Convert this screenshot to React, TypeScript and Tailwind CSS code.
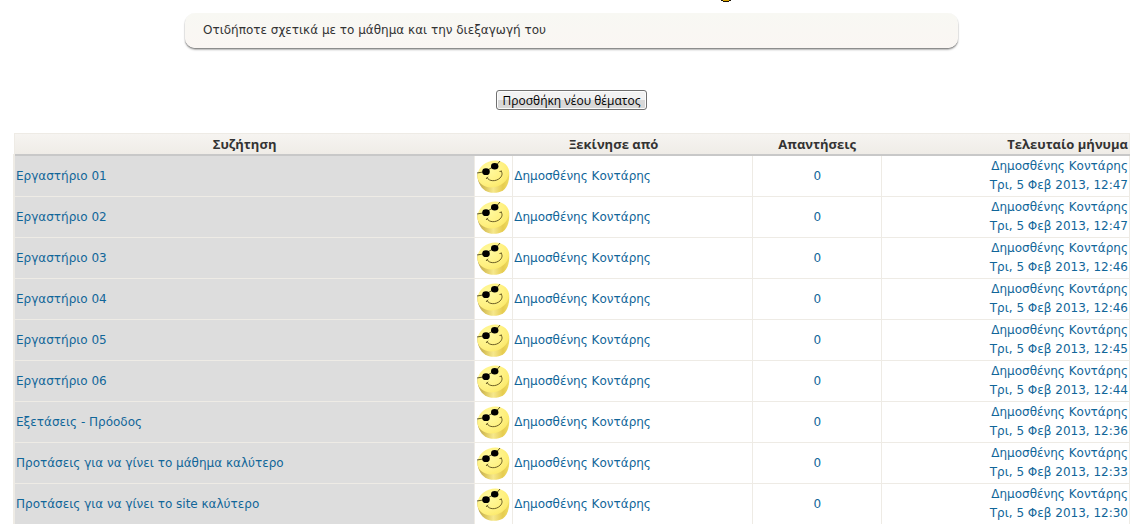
interface Discussion {
  id: number
  title: string
  author: string
  replies: number
  lastPost: string
}

const AUTHOR = 'Δημοσθένης Κοντάρης'

const DISCUSSIONS: Discussion[] = [
  { id: 1, title: 'Εργαστήριο 01', author: AUTHOR, replies: 0, lastPost: 'Τρι, 5 Φεβ 2013, 12:47' },
  { id: 2, title: 'Εργαστήριο 02', author: AUTHOR, replies: 0, lastPost: 'Τρι, 5 Φεβ 2013, 12:47' },
  { id: 3, title: 'Εργαστήριο 03', author: AUTHOR, replies: 0, lastPost: 'Τρι, 5 Φεβ 2013, 12:46' },
  { id: 4, title: 'Εργαστήριο 04', author: AUTHOR, replies: 0, lastPost: 'Τρι, 5 Φεβ 2013, 12:46' },
  { id: 5, title: 'Εργαστήριο 05', author: AUTHOR, replies: 0, lastPost: 'Τρι, 5 Φεβ 2013, 12:45' },
  { id: 6, title: 'Εργαστήριο 06', author: AUTHOR, replies: 0, lastPost: 'Τρι, 5 Φεβ 2013, 12:44' },
  { id: 7, title: 'Εξετάσεις - Πρόοδος', author: AUTHOR, replies: 0, lastPost: 'Τρι, 5 Φεβ 2013, 12:36' },
  { id: 8, title: 'Προτάσεις για να γίνει το μάθημα καλύτερο', author: AUTHOR, replies: 0, lastPost: 'Τρι, 5 Φεβ 2013, 12:33' },
  { id: 9, title: 'Προτάσεις για να γίνει το site καλύτερο', author: AUTHOR, replies: 0, lastPost: 'Τρι, 5 Φεβ 2013, 12:30' }
]

function Smiley() {
  return (
    <svg viewBox="0 0 35 35" className="block h-[35px] w-[35px]" aria-hidden="true">
      <defs>
        <radialGradient id="face" cx="0.4" cy="0.3" r="0.8">
          <stop offset="0" stopColor="#fffaa0" />
          <stop offset="0.6" stopColor="#fff182" />
          <stop offset="1" stopColor="#fbe866" />
        </radialGradient>
        <linearGradient id="rim" x1="0" y1="0" x2="1" y2="0">
          <stop offset="0" stopColor="#b5a050" />
          <stop offset="0.25" stopColor="#dcc65c" />
          <stop offset="0.5" stopColor="#f6e88c" />
          <stop offset="0.8" stopColor="#e6cc50" />
          <stop offset="1" stopColor="#f0dc60" />
        </linearGradient>
      </defs>
      <path d="M1.3 15C1.3 22 4 28 9 31.5C14 34.8 22 34.5 27 31.5C32 28 34 20 33 11Z" fill="url(#rim)" />
      <ellipse cx="17.2" cy="15" rx="16.2" ry="13" transform="rotate(-20 17.2 15)" fill="url(#face)" />
      <path d="M1 14L7 13M12.5 10.5L16 8.5M21 5.5L24 2" fill="none" stroke="#4a4218" strokeWidth="0.9" />
      <ellipse cx="10" cy="12.7" rx="3.8" ry="3.4" fill="#000" />
      <ellipse cx="18.7" cy="7.2" rx="3.7" ry="3.3" fill="#000" />
      <path d="M11 18.5C13 22.5 20 22.8 24 19C26.5 16.5 26.5 14 25 12M10 20L12 17.8M23.5 12.5L26 12" fill="none" stroke="#5a4d1a" strokeWidth="0.9" />
    </svg>
  )
}

function DiscussionRow({ discussion }: { discussion: Discussion }) {
  return (
    <tr>
      <td className="border border-l-2 border-[#eeebe5] bg-[#dddddd] p-px">
        <a href="#" className="hover:underline">{discussion.title}</a>
      </td>
      <td className="border border-[#eeebe5] p-px">
        <a href="#" aria-label={discussion.author}>
          <Smiley />
        </a>
      </td>
      <td className="border border-[#eeebe5] p-px">
        <a href="#" className="hover:underline">{discussion.author}</a>
      </td>
      <td className="border border-[#eeebe5] p-px text-center">
        <a href="#" className="hover:underline">{discussion.replies}</a>
      </td>
      <td className="border border-[#eeebe5] p-px text-right">
        <a href="#" className="hover:underline">{discussion.author}</a>
        <br />
        <a href="#" className="hover:underline">{discussion.lastPost}</a>
      </td>
    </tr>
  )
}

export default function App() {
  return (
    <main className="bg-white pr-[11px] pl-[13px] font-['Verdana','DejaVu_Sans',sans-serif] text-xs leading-[19px] text-[#333333]">
      {/* Lower edge of the badge above the forum intro */}
      <div className="flex h-[13px] justify-center pl-[308px]">
        <svg viewBox="0 0 10 2" className="h-[2px] w-[10px]" aria-hidden="true">
          <path d="M0 0H10V1H8V2H2V1H0Z" fill="#1c1408" />
          <path d="M2 0H8V1H2Z" fill="#d9a300" />
        </svg>
      </div>

      <section className="mx-auto w-[69.2%] rounded-[10px] bg-linear-to-b from-[#f8f8f3] to-[#faf6f3] px-[18px] pt-2 pb-2 shadow-[0_1px_1px_#888888,0_2px_2px_#bbbbbb]">
        <p>Οτιδήποτε σχετικά με το μάθημα και την διεξαγωγή του</p>
      </section>

      <div className="mt-[42px] flex justify-center">
        <button
          type="button"
          className="h-5 rounded-[3px] border border-[#707070] bg-linear-to-b from-[#f2f2f2] from-50% to-[#d8d8d8] to-50% px-1.5 pt-px font-['Open_Sans',sans-serif] text-xs leading-[17px] whitespace-nowrap text-black shadow-[inset_0_0_0_1px_#fcfcfc]"
        >
          Προσθήκη νέου θέματος
        </button>
      </div>

      <table className="mt-[23px] w-full table-fixed border-collapse border border-[#eeebe5] text-[#116699]">
        <colgroup>
          <col className="w-[41.3%]" />
          <col className="w-[38px]" />
          <col className="w-[21.5%]" />
          <col className="w-[11.6%]" />
          <col />
        </colgroup>
        <thead className="font-['Open_Sans',sans-serif] text-[13px] leading-[18px] text-[#333333]">
          <tr className="border-b-2 border-[#c8c8c8] bg-linear-to-b from-[#f6f4f1] to-[#efece7]">
            <th scope="col" className="p-px">Συζήτηση</th>
            <th scope="col" colSpan={2} className="p-px">Ξεκίνησε από</th>
            <th scope="col" className="p-px">Απαντήσεις</th>
            <th scope="col" className="p-px text-right">Τελευταίο μήνυμα</th>
          </tr>
        </thead>
        <tbody>
          {DISCUSSIONS.map(discussion => (
            <DiscussionRow key={discussion.id} discussion={discussion} />
          ))}
        </tbody>
      </table>
    </main>
  )
}
